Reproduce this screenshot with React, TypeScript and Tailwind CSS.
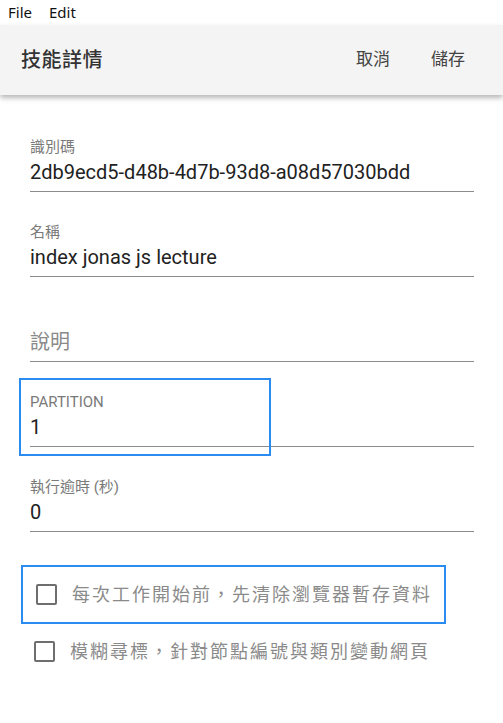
import React from "react";

const cjk = "font-['Roboto','Noto_Sans_CJK_TC',sans-serif]";

function Field({ label, value, placeholder }: { label?: string; value?: string; placeholder?: string }) {
  return (
    <div className="h-[85px] flex flex-col justify-end border-b border-[#8c8c8c] pb-[6px]">
      {label && <div className="text-[15px] leading-[18px] text-[#7a7a7a] mb-[3px]">{label}</div>}
      {value !== undefined ? (
        <div className="text-[20px] leading-[26px] text-[#222]">{value}</div>
      ) : (
        <div className="text-[20px] leading-[26px] text-[#8a8a8a]">{placeholder}</div>
      )}
    </div>
  );
}

function Check({ text }: { text: string }) {
  return (
    <div className="flex items-center h-[55px] pl-[13px]">
      <div className="w-[21px] h-[21px] border-2 border-[#6e6e6e] rounded-[2px] shrink-0" />
      <span className="ml-[15px] text-[18px] tracking-[2px] text-[#8a8a8a]">{text}</span>
    </div>
  );
}

export default function App() {
  return (
    <div className={`w-[503px] h-[723px] bg-white overflow-hidden ${cjk}`}>
      {/* menu bar */}
      <div className="h-[25px] flex items-center gap-[17px] px-[8px] text-[15px] text-[#111] font-['Noto_Sans',sans-serif]">
        <span>File</span>
        <span>Edit</span>
      </div>

      {/* app bar */}
      <div className="relative z-10 h-[70px] bg-[#f4f4f4] shadow-[0_3px_5px_rgba(0,0,0,0.28)] flex items-center px-[21px]">
        <div className="text-[20px] font-medium text-[#333] tracking-[0.5px]">技能詳情</div>
        <div className="ml-auto flex items-center gap-[41px] text-[17px] text-[#444] pr-[17px]">
          <span>取消</span>
          <span>儲存</span>
        </div>
      </div>

      <div className="px-[30px] pr-[29px] pt-[12px]">
        <Field label="識別碼" value="2db9ecd5-d48b-4d7b-93d8-a08d57030bdd" />
        <Field label="名稱" value="index jonas js lecture" />
        <Field placeholder="說明" />
        <div className="relative">
          <Field label="PARTITION" value="1" />
          <div className="absolute left-[-11px] top-[16px] w-[252px] h-[78px] border-2 border-[#2a8cf0] pointer-events-none" />
        </div>
        <Field label="執行逾時 (秒)" value="0" />
      </div>

      <div className="px-[21px] pt-[33px]">
        <div className="w-[425px] border-2 border-[#2a8cf0]">
          <Check text="每次工作開始前，先清除瀏覽器暫存資料" />
        </div>
        <Check text="模糊尋標，針對節點編號與類別變動網頁" />
      </div>
    </div>
  );
}
